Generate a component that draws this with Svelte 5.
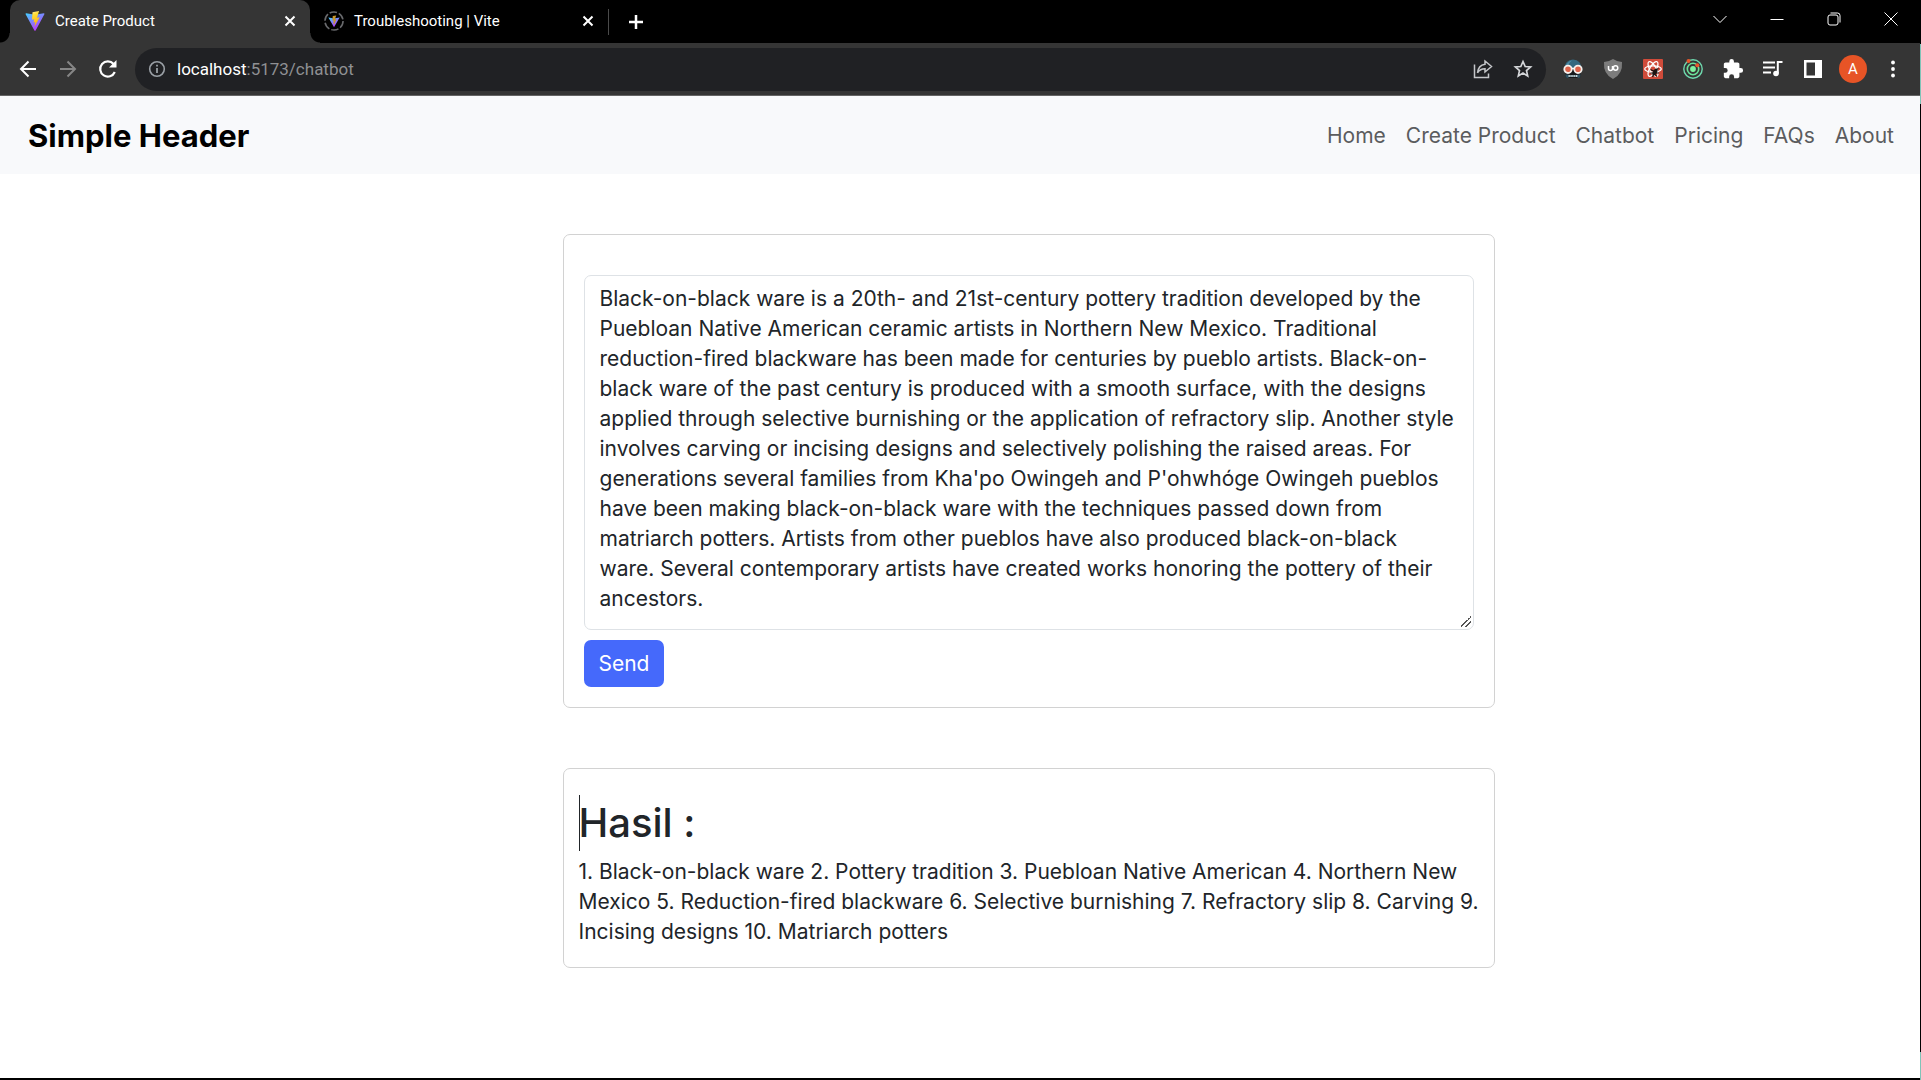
<script>
  let prompt = $state(
    "Black-on-black ware is a 20th- and 21st-century pottery tradition developed by the Puebloan Native American ceramic artists in Northern New Mexico. Traditional reduction-fired blackware has been made for centuries by pueblo artists. Black-on-black ware of the past century is produced with a smooth surface, with the designs applied through selective burnishing or the application of refractory slip. Another style involves carving or incising designs and selectively polishing the raised areas. For generations several families from Kha'po Owingeh and P'ohwhóge Owingeh pueblos have been making black-on-black ware with the techniques passed down from matriarch potters. Artists from other pueblos have also produced black-on-black ware. Several contemporary artists have created works honoring the pottery of their ancestors."
  );

  const links = ['Home', 'Create Product', 'Chatbot', 'Pricing', 'FAQs', 'About'];
  const keywords = [
    'Black-on-black ware',
    'Pottery tradition',
    'Puebloan Native American',
    'Northern New Mexico',
    'Reduction-fired blackware',
    'Selective burnishing',
    'Refractory slip',
    'Carving',
    'Incising designs',
    'Matriarch potters'
  ];
  const result = keywords.map((k, i) => `${i + 1}. ${k}`).join(' ');
</script>

{#snippet cross()}
  <svg width="12" height="12" viewBox="0 0 12 12"><path d="M1.5 1.5l9 9M10.5 1.5l-9 9" stroke="#fff" stroke-width="2" /></svg>
{/snippet}

<div class="desktop">
  <div class="window">
    <div class="tabstrip">
      <div class="tab active">
        <svg width="20" height="20" viewBox="0 0 32 32">
          <defs>
            <linearGradient id="tri" x1="0" y1="0" x2="0.6" y2="1"><stop offset="0" stop-color="#41d1ff" /><stop offset="1" stop-color="#bd34fe" /></linearGradient>
            <linearGradient id="bolt" x1="0.4" y1="0" x2="0.6" y2="1"><stop offset="0" stop-color="#ffea83" /><stop offset="0.2" stop-color="#ffdd35" /><stop offset="1" stop-color="#ffa800" /></linearGradient>
          </defs>
          <path d="M31 5L17 31q-1 1-2 0L1 5q-.5-1.500 1-1.500l14 2.500 14-2.500q1.500 0 1 1.500z" fill="url(#tri)" />
          <path d="M22.500 0L12 2.100l-.8 11.800 3.500-.8-1 5.300 2.800-.8-1.500 7.900 8.500-15.500-4.300.8z" fill="url(#bolt)" />
        </svg>
        <span class="title">Create Product</span>
        <button aria-label="Close Create Product">{@render cross()}</button>
      </div>
      <div class="tab">
        <svg width="20" height="20" viewBox="0 0 32 32">
          <circle cx="16" cy="16" r="14.500" fill="none" stroke="#68696c" stroke-width="2.500" stroke-dasharray="12 3.180" />
          <path d="M25 10.500L16 26 7 10.500l9 1.500z" fill="url(#tri)" />
          <path d="M19.500 7L14 8l-.5 7h2l-.5 4 1 3 4-9h-2.500z" fill="#c9972c" />
        </svg>
        <span class="title">Troubleshooting | Vite</span>
        <button aria-label="Close Troubleshooting">{@render cross()}</button>
      </div>
      <span class="divider"></span>
      <button class="newtab" aria-label="New tab"><svg width="16" height="16" viewBox="0 0 16 16"><path d="M8 1v14M1 8h14" stroke="#fff" stroke-width="2.500" /></svg></button>
      <div class="controls">
        <button aria-label="Search tabs"><svg width="14" height="14" viewBox="0 0 14 14"><path d="M.5 4L7 10.500 13.500 4" /></svg></button>
        <button aria-label="Minimize"><svg width="14" height="14" viewBox="0 0 14 14"><path d="M.5 7.500h13" /></svg></button>
        <button aria-label="Restore"><svg width="14" height="14" viewBox="0 0 14 14"><rect x="1" y="3" width="10" height="10" rx="2" /><path d="M3.500 1H10.500a2.500 2.500 0 0 1 2.500 2.500V10.500" /></svg></button>
        <button aria-label="Close window"><svg width="14" height="14" viewBox="0 0 14 14"><path d="M.5 .5l13 13M13.500 .5l-13 13" /></svg></button>
      </div>
    </div>

    <div class="toolbar">
      <button aria-label="Back"><svg width="18" height="18" viewBox="0 0 18 18" fill="none" stroke="#fff" stroke-width="2"><path d="M17 9H2M9.500 1.500L2 9l7.500 7.500" /></svg></button>
      <button aria-label="Forward"><svg width="18" height="18" viewBox="0 0 18 18" fill="none" stroke="#868686" stroke-width="2"><path d="M1 9h15M8.500 1.500L16 9l-7.500 7.500" /></svg></button>
      <button aria-label="Reload"><svg width="20" height="20" viewBox="0 0 20 20"><path d="M16.800 13A7.600 7.600 0 1 1 15.600 5" fill="none" stroke="#fff" stroke-width="2.200" /><path d="M18.500 1v7.500H11z" fill="#fff" /></svg></button>
      <div class="omnibox">
        <svg width="18" height="18" viewBox="0 0 18 18"><circle cx="9" cy="9" r="7.300" fill="none" stroke="#9aa0a6" stroke-width="1.600" /><path d="M9 8v5M9 4.800v1.800" stroke="#9aa0a6" stroke-width="1.800" /></svg>
        <span class="url">localhost<span>:5173/chatbot</span></span>
        <button aria-label="Share"><svg width="20" height="20" viewBox="0 0 20 20" fill="none" stroke="#c4c6c9" stroke-width="1.500"><path d="M1.500 5.500v13h14v-4M12 2l6.500 5.500L12 13v-3.200q-5 0-7.500 4 .8-7.500 7.500-8.500z" /></svg></button>
        <button aria-label="Bookmark"><svg width="20" height="20" viewBox="0 0 20 20"><path d="M10 2.500l2.200 5 5.400.5-4.100 3.600 1.200 5.300L10 14.100l-4.700 2.800 1.200-5.300L2.400 8l5.400-.5z" fill="none" stroke="#d5d7da" stroke-width="1.700" /></svg></button>
      </div>
      <button aria-label="Goggles extension"><svg width="20" height="20" viewBox="0 0 20 20"><path d="M1.500 9Q2 1 10 .5 18 1 18.500 9z" fill="#33687f" /><path d="M3 6q2-4 6-4.500Q5.500 4 5 7z" fill="#4b8aa3" /><path d="M2.500 11h15v5q0 3-2 3h-11q-2 0-2-3z" fill="#16191c" /><path d="M2.500 15.500h3V19h-1q-2 0-2-3zM14.500 15.500h3q0 3.500-2 3.500h-1z" fill="#2f5364" /><path d="M5.500 17h9" stroke="#d5eef5" stroke-width="2" stroke-dasharray="1.300 .6" /><path d="M8 9.500h4" stroke="#fff" stroke-width="1.500" /><circle cx="5" cy="10.300" r="3.700" fill="#dd6249" stroke="#f6f0ec" stroke-width="1.800" /><circle cx="15" cy="10.300" r="3.700" fill="#dd6249" stroke="#f6f0ec" stroke-width="1.800" /></svg></button>
      <button aria-label="uBlock Origin"><svg width="20" height="20" viewBox="0 0 20 20"><path d="M10 0q4 2.800 9 3 1 12-9 17Q0 15 1 3q5-.2 9-3z" fill="#7c7c7c" /><path d="M5.500 7v2.500a2 2 0 0 0 4 0V7" fill="none" stroke="#fff" stroke-width="1.500" /><circle cx="12.600" cy="9" r="2.200" fill="none" stroke="#fff" stroke-width="1.500" /></svg></button>
      <button aria-label="React developer tools"><svg width="20" height="20" viewBox="0 0 20 20"><rect width="20" height="20" rx="1" fill="#d04b3a" /><g fill="none" stroke="#fff" stroke-width="1.300"><ellipse cx="10" cy="10" rx="8.300" ry="3.200" /><ellipse cx="10" cy="10" rx="8.300" ry="3.200" transform="rotate(60 10 10)" /><ellipse cx="10" cy="10" rx="8.300" ry="3.200" transform="rotate(120 10 10)" /></g><ellipse cx="12" cy="13" rx="2" ry="3.800" transform="rotate(30 12 13)" fill="#1d1413" /><path d="M7.500 10.500l3 1.500 5-2.500M7.500 14h8.500M9.500 18l1.500-3.500 3 3" fill="none" stroke="#1d1413" stroke-width="1.200" /></svg></button>
      <button aria-label="Orbit extension"><svg width="20" height="20" viewBox="0 0 20 20"><circle cx="10" cy="10" r="9.200" fill="none" stroke="#6fd9ae" stroke-width="1.400" /><circle cx="10" cy="10" r="5.700" fill="none" stroke="#6be29a" stroke-width="1.600" /><circle cx="10" cy="10" r="2.900" fill="#7df2a0" /><circle cx="5.500" cy="2" r="2" fill="#e8562a" /><circle cx="14.300" cy="6.200" r="2" fill="#e8562a" /></svg></button>
      <button aria-label="Extensions"><svg width="22" height="22" viewBox="0 0 24 24"><path d="M20.500 11H19V7c0-1.100-.9-2-2-2h-4V3.500a2.500 2.500 0 0 0-5 0V5H4c-1.100 0-2 .9-2 2v3.800h1.500a2.700 2.700 0 0 1 0 5.400H2V20c0 1.100.9 2 2 2h3.800v-1.500a2.700 2.700 0 0 1 5.400 0V22H17c1.100 0 2-.9 2-2v-4h1.500a2.500 2.500 0 0 0 0-5z" fill="#fff" /></svg></button>
      <button aria-label="Media controls"><svg width="20" height="20" viewBox="0 0 20 20"><path d="M0 3.500h12M0 8.500h12M0 13.500h8" stroke="#fff" stroke-width="2" /><circle cx="13" cy="14.500" r="2.800" fill="#fff" /><path d="M14.800 14.500V3h4.700" fill="none" stroke="#fff" stroke-width="2" /></svg></button>
      <button aria-label="Side panel"><svg width="20" height="20" viewBox="0 0 20 20"><path d="M1 1h18v18H1zM3.500 3.500v13H12v-13z" fill="#fff" fill-rule="evenodd" /></svg></button>
      <button aria-label="Profile"><span class="avatar">A</span></button>
      <button aria-label="Menu"><svg width="20" height="20" viewBox="0 0 20 20" fill="#fff"><circle cx="10" cy="3.500" r="1.900" /><circle cx="10" cy="10" r="1.900" /><circle cx="10" cy="16.500" r="1.900" /></svg></button>
    </div>

    <header>
      <a class="brand" href="/">Simple Header</a>
      <nav>
        {#each links as link}<a href="#{link}">{link}</a>{/each}
      </nav>
    </header>

    <main>
      <div class="column">
        <form class="card" onsubmit={(e) => e.preventDefault()}>
          <textarea aria-label="Prompt" bind:value={prompt} spellcheck="false"></textarea>
          <button class="send">Send</button>
        </form>
        <section class="card output">
          <h1>Hasil :</h1>
          <p>{result}</p>
        </section>
      </div>
    </main>
  </div>
  <div class="edge"><span></span><span></span></div>
</div>

<style>
  :global(body) { margin: 0; background: #000; }
  * { box-sizing: border-box; }
  svg { display: block; flex: none; }
  a { text-decoration: none; }
  button { border: 0; padding: 0; background: none; font: inherit; display: flex; align-items: center; justify-content: center; }

  .desktop { display: flex; min-height: 100vh; background: #000; }
  .window { flex: 1; min-width: 0; display: flex; flex-direction: column; border-bottom: 2px solid #000; font-family: Inter, "Open Sans", sans-serif; color: #212529; background: #fff; }
  .edge { width: 1px; display: flex; flex-direction: column; justify-content: space-between; padding-top: 44px; }
  .edge span { height: 60px; background: #7fc4b8; }
  .edge span:last-child { height: 28px; }

  .tabstrip { display: flex; align-items: center; height: 43px; padding: 0 1px 0 10px; background: #000; color: #fff; font: 15px Roboto, sans-serif; }
  .tab { position: relative; display: flex; align-items: center; gap: 10px; width: 298px; height: 43px; padding: 0 10px 2px 14px; }
  .tab.active { width: 300px; padding-left: 15px; background: #353535; border-radius: 10px 10px 0 0; }
  .tab.active::before, .tab.active::after { content: ""; position: absolute; bottom: 0; width: 10px; height: 10px; }
  .tab.active::before { right: 100%; background: radial-gradient(circle at 0 0, #000 9px, #353535 10px); }
  .tab.active::after { left: 100%; background: radial-gradient(circle at 100% 0, #000 9px, #353535 10px); }
  .title { flex: 1; white-space: nowrap; }
  .tab button { width: 20px; height: 20px; }
  .divider { width: 1px; height: 26px; background: #4a4a4a; }
  .newtab { width: 54px; height: 40px; }
  .controls { display: flex; margin-left: auto; align-self: stretch; }
  .controls button { width: 57px; height: 37px; }
  .controls svg { fill: none; stroke: #fff; stroke-width: 1; }

  .toolbar { display: flex; align-items: center; height: 53px; padding: 0 7px 0 8px; background: #353535; border-bottom: 1px solid #646464; font-family: Roboto, sans-serif; }
  .toolbar button { width: 40px; height: 40px; flex: none; }
  .omnibox { flex: 1; display: flex; align-items: center; height: 43px; margin: 0 7px; padding: 0 3px 0 13px; border-radius: 22px; background: #202124; }
  .url { flex: 1; margin-left: 11px; font-size: 17px; color: #fff; }
  .url span { color: #8f9093; }
  .avatar { width: 28px; height: 28px; border-radius: 50%; background: #e75426; color: #fff; font-size: 15px; line-height: 28px; }

  header { display: flex; align-items: center; justify-content: space-between; height: 78px; padding: 0 26px 0 28px; background: #f8f9fb; }
  .brand { font-size: 31px; font-weight: 700; color: #000; }
  nav { display: flex; gap: 20px; font-size: 21px; }
  nav a { color: #5b5c5e; }

  main { flex: 1; width: 100%; max-width: 1650px; margin: 0 auto; padding-top: 60px; display: grid; grid-template-columns: 3fr 7fr 2fr; align-items: start; }
  .column { grid-column: 2; padding: 0 15px; display: flex; flex-direction: column; gap: 60px; }
  .card { border: 1px solid #d2d2d2; border-radius: 7px; padding: 40px 20px 20px; font-size: 21px; line-height: 30px; }
  textarea { display: block; width: 100%; height: 355px; padding: 8px 18px 7px 15px; border: 1px solid #dee2e6; border-radius: 7px; color: inherit; background: #fff; font: inherit; resize: vertical; outline: none; }
  textarea::-webkit-resizer { background: linear-gradient(135deg, transparent 50%, #555 50%, #555 58%, transparent 58%, transparent 72%, #555 72%, #555 80%, transparent 80%) center / 11px 11px no-repeat; }
  .send { margin-top: 10px; padding: 0 15px; height: 47px; border-radius: 7px; background: #4569fb; color: #fff; font-size: 21px; }
  .output { padding: 30px 15px 20px; }
  h1 { position: relative; margin: 0 0 10px; font-size: 40px; line-height: 48px; font-weight: 500; }
  h1::before { content: ""; position: absolute; left: 0; top: -4px; width: 1px; height: 56px; background: #212529; }
  p { margin: 0; }
</style>
